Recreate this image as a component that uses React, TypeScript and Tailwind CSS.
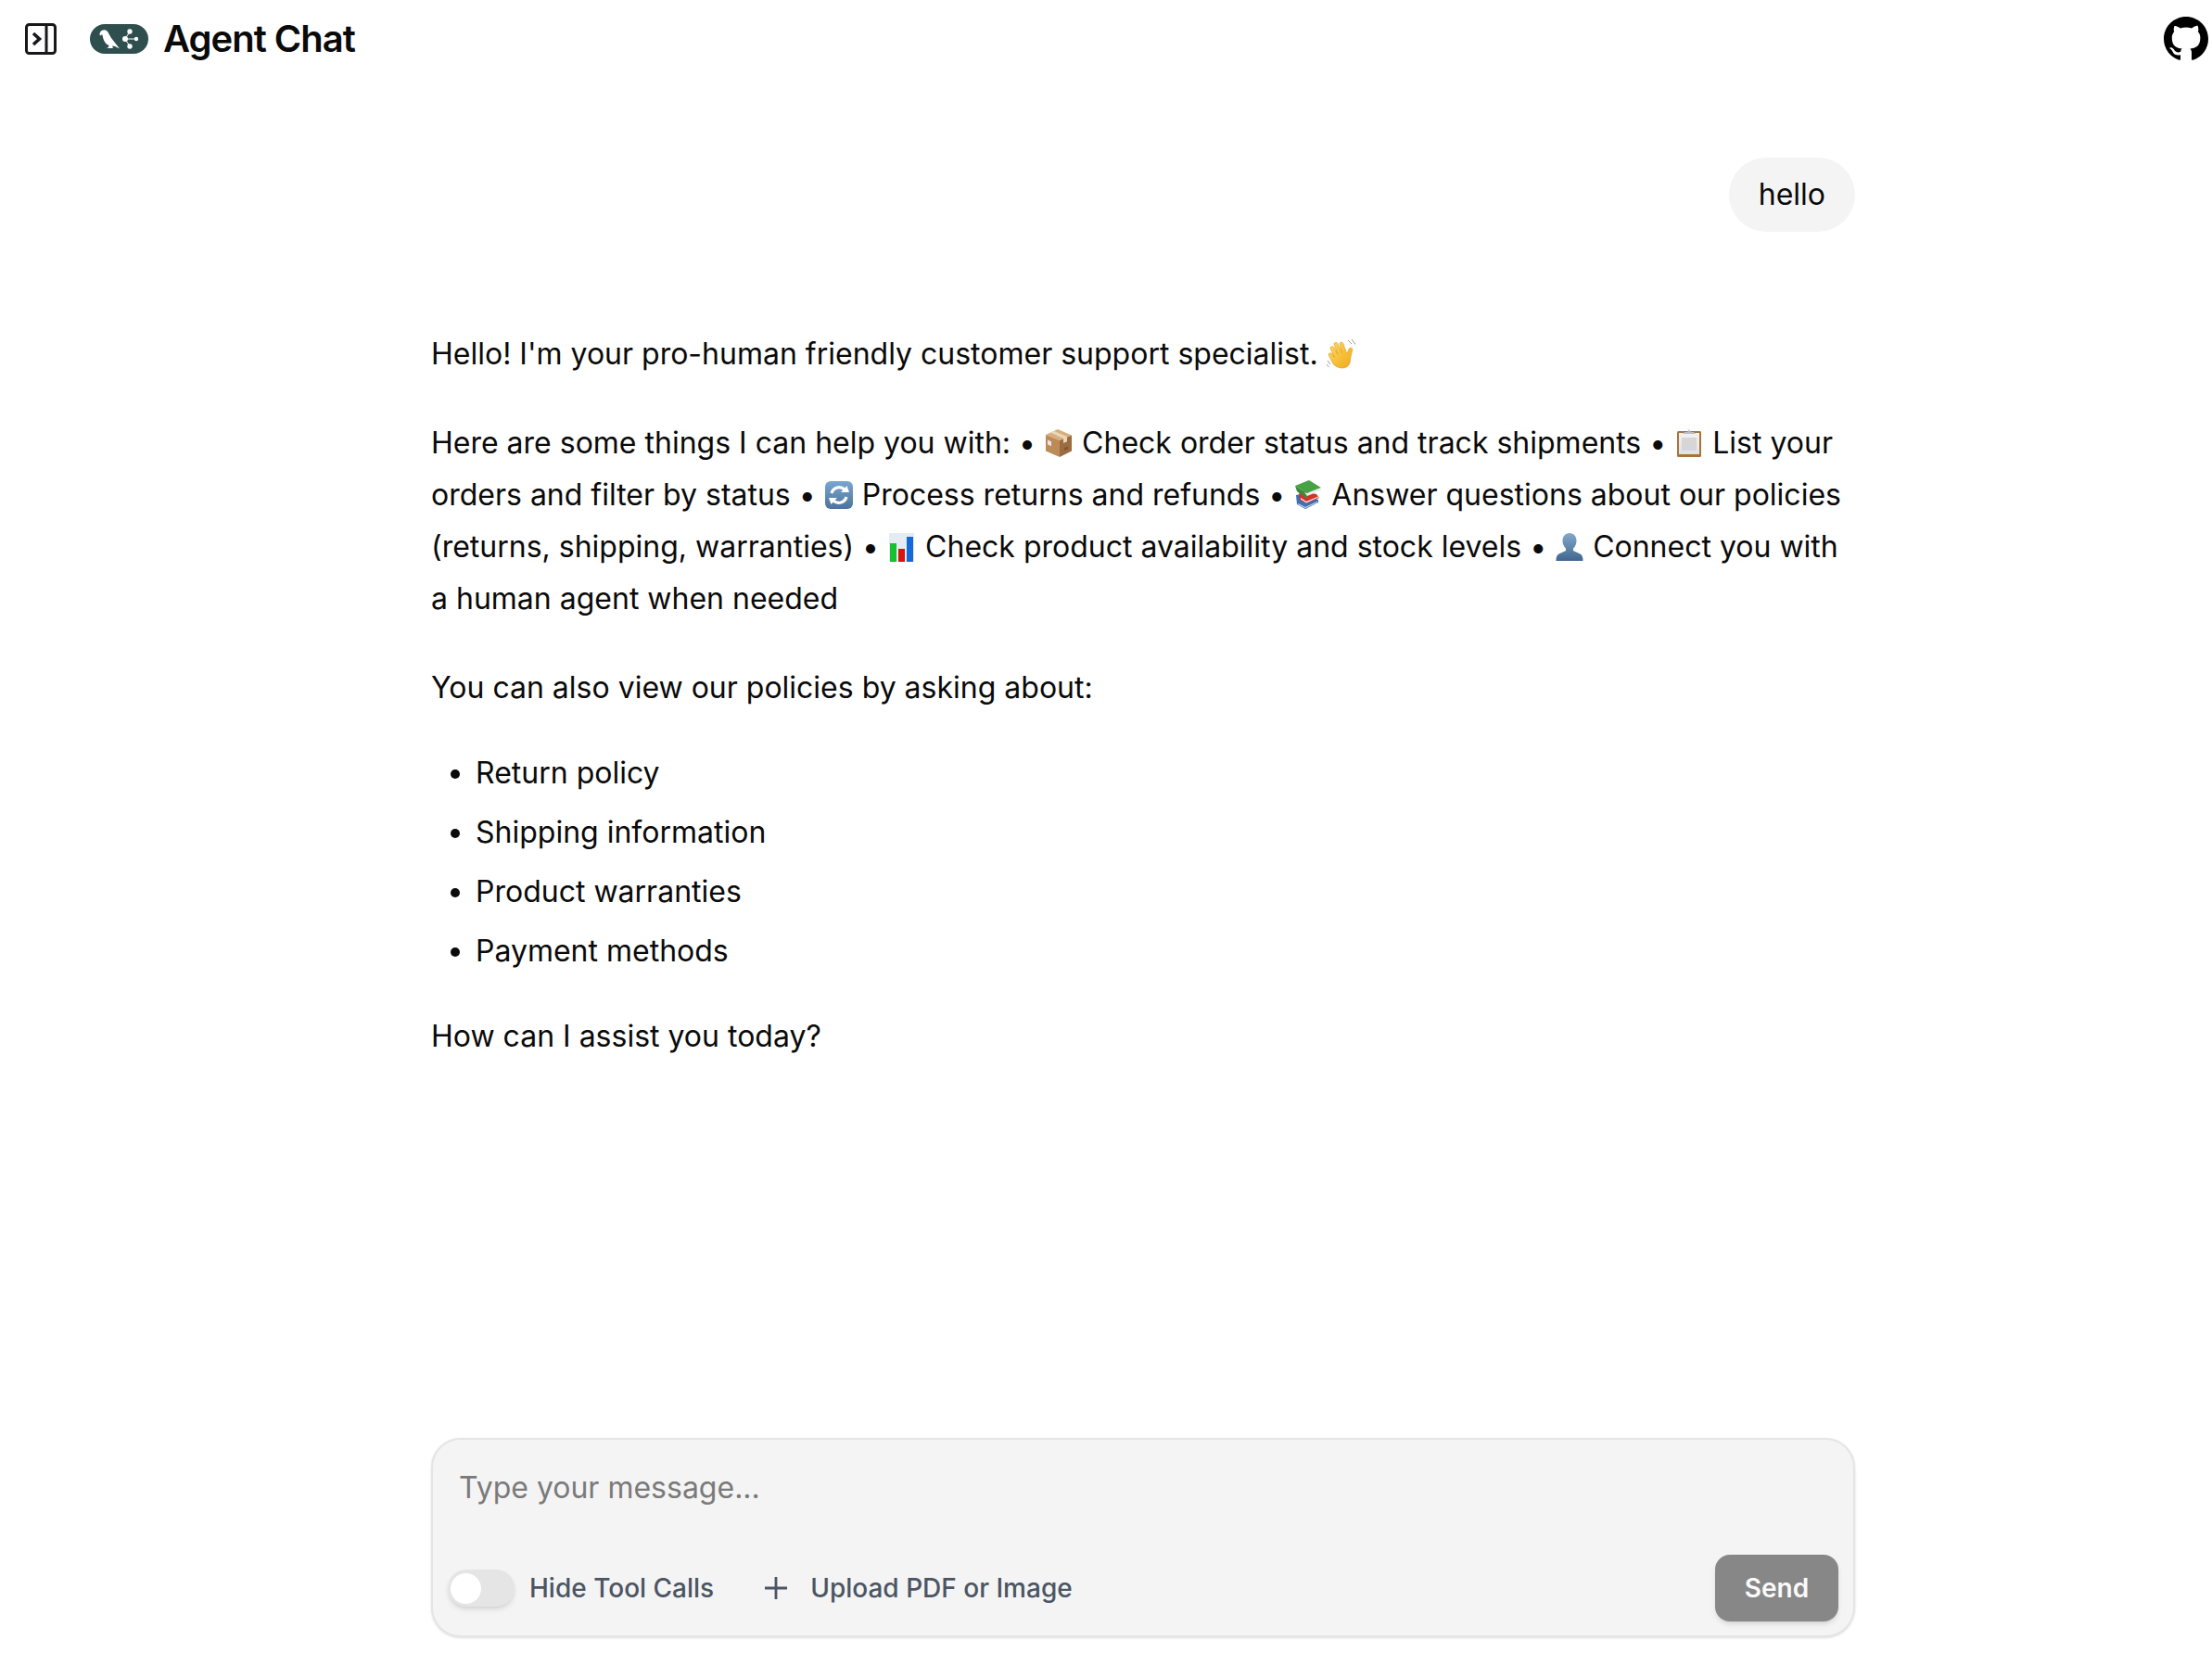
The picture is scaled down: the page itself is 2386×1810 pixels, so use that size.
import React from 'react';

const font = "font-['Inter','Liberation_Sans',sans-serif]";

function PanelIcon() {
  return (
    <svg width="34" height="34" viewBox="0 0 34 34" fill="none" stroke="#18181b" strokeWidth="3" className="shrink-0">
      <rect x="1.500" y="1.500" width="31" height="31" rx="3" />
      <path d="M23 1.500v31" />
      <path d="M9 11l6.500 6L9 23" strokeWidth="3.600" />
    </svg>
  );
}

function Logo() {
  return (
    <svg width="63" height="32" viewBox="0 0 63 32" className="shrink-0">
      <rect width="63" height="32" rx="16" fill="#2f4f4f" />
      <path d="M11 9c1-3 5-3.500 7-2 2 1.500 3 5 5 8l9 11.500-5-2.500-3-.5 1 2.500h-7l2-1 .5-2c-3-1-5-4-6-7-.5-2-1-3.500-1-4.500-1 0-2 .5-2.500 1-.5-1-.5-2-.5-2z" fill="#fff" />
      <circle cx="43" cy="8" r="2.700" fill="#fff" />
      <circle cx="43" cy="24" r="2.700" fill="#fff" />
      <circle cx="38" cy="16" r="3" fill="#fff" />
      <circle cx="50" cy="16" r="2.200" fill="#fff" />
      <path d="M43 8l-5 8 5 8M38 16h12" stroke="#fff" strokeWidth="1" fill="none" />
    </svg>
  );
}

function GithubIcon() {
  return (
    <svg width="48" height="48" viewBox="0 0 16 16" fill="#000">
      <path d="M8 0C3.580 0 0 3.580 0 8c0 3.540 2.290 6.530 5.470 7.590.4.070.55-.17.55-.38 0-.19-.01-.82-.01-1.490-2.010.37-2.530-.49-2.690-.94-.09-.23-.48-.94-.82-1.130-.28-.15-.68-.52-.01-.53.63-.01 1.080.58 1.230.82.72 1.210 1.870.87 2.330.66.070-.52.280-.87.510-1.070-1.780-.2-3.640-.89-3.640-3.950 0-.87.310-1.590.820-2.150-.08-.2-.36-1.020.08-2.120 0 0 .67-.21 2.200.82.640-.18 1.320-.27 2-.27s1.360.09 2 .27c1.530-1.040 2.200-.82 2.200-.82.440 1.100.160 1.920.080 2.120.510.560.820 1.270.820 2.150 0 3.070-1.870 3.750-3.650 3.950.290.250.540.730.540 1.480 0 1.070-.01 1.930-.01 2.200 0 .210.150.460.550.380A8.010 8.010 0 0016 8c0-4.420-3.580-8-8-8z" />
    </svg>
  );
}

function Emoji({ children }: { children: React.ReactNode }) {
  return (
    <svg width="32" height="32" viewBox="0 0 32 32" className="inline-block align-[-5px]">
      {children}
    </svg>
  );
}

const Wave = () => (
  <Emoji>
    <defs>
      <linearGradient id="hand" x1="0" y1="0" x2="1" y2="1">
        <stop offset="0" stopColor="#fddc5c" />
        <stop offset="1" stopColor="#f0a81c" />
      </linearGradient>
    </defs>
    <path transform="translate(-2 0) scale(1.22 1)" d="M15 31c-4.500-.5-7-3-8.500-6.500L3.500 17c-.7-2 1.800-3 2.900-1.300l2.200 3.800L5 9.800c-.7-2 1.900-3 2.900-1.200l3.600 7.400L8.300 5.500c-.6-2 2.100-2.900 3-1l3.900 9.900-2-9.400c-.4-2 2.300-2.600 3-.6l3.300 11 1.900-5c.8-2 3.500-1.100 3 1l-1.800 9.300C22.800 27 20 31.300 15 31z" fill="url(#hand)" stroke="#d98f10" strokeWidth=".5" />
    <path d="M23 1l4 4M27 0l4 5.500M1 23l3 4M0 27l2.500 3" stroke="#8f8f8f" strokeWidth=".9" fill="none" />
  </Emoji>
);

const Box = () => (
  <Emoji>
    <path d="M15 1L30 7.500 17 13 2 7z" fill="#d9ad7c" />
    <path d="M2 7l15 6v18L2 24.500z" fill="#bd8b58" />
    <path d="M17 13l13-5.500V24.500L17 31z" fill="#9c6c3e" />
    <path d="M7 4.500L21 11v5l4-1.700V9L11 3z" fill="#e8d6bd" />
    <rect x="4" y="11" width="4" height="5" fill="#e6e6e6" transform="skewY(22)" />
    <path d="M22 21l4-1.500v3L22 24z" fill="#7f5630" />
  </Emoji>
);

const Clipboard = () => (
  <Emoji>
    <defs>
      <linearGradient id="paper" x1="0" y1="0" x2="0" y2="1">
        <stop offset="0" stopColor="#f2f2f2" />
        <stop offset="1" stopColor="#e2e2e2" />
      </linearGradient>
    </defs>
    <rect x="3" y="3" width="26" height="28" rx="1.500" fill="#a97338" />
    <rect x="5" y="5" width="22" height="23" fill="url(#paper)" />
    <rect x="8" y="10" width="16" height="14" fill="#d6d6d6" />
    <path d="M9 6l2-2h3l2-3 2 3h3l2 2z" fill="#b8bcc2" />
  </Emoji>
);

const Arrows = () => (
  <Emoji>
    <defs>
      <linearGradient id="tile" x1="0" y1="0" x2="0" y2="1">
        <stop offset="0" stopColor="#7aa6d2" />
        <stop offset="1" stopColor="#4d7399" />
      </linearGradient>
    </defs>
    <rect x="1" y="1" width="30" height="30" rx="6" fill="url(#tile)" />
    <path d="M8 14a8.500 8.500 0 0 1 14-4" stroke="#fff" strokeWidth="3.200" fill="none" />
    <path d="M27 13h-9l6.500-7z" fill="#fff" />
    <path d="M24 18a8.500 8.500 0 0 1-14 4" stroke="#fff" strokeWidth="3.200" fill="none" />
    <path d="M5 19h9l-6.500 7z" fill="#fff" />
  </Emoji>
);

const Books = () => (
  <Emoji>
    <path d="M3 16l5-1 19 6v3l-14 7-9-5z" fill="#3f6fb5" />
    <path d="M5 25l8 4 13-6v1l-13 6-8-4z" fill="#e8e8e8" />
    <path d="M6 11l19 4 3 4-14 6-7-4z" fill="#d5332a" />
    <path d="M8 19l6 4 13-5.500v1L14 24.500l-6-4z" fill="#f0f0f0" />
    <path d="M2 6L17 0l13 8-15 6z" fill="#45a343" />
    <path d="M2 6l13 8v6L4 12z" fill="#3c8a3a" />
    <path d="M12 13l3 1 15-6v3l-15 6z" fill="#eeeeee" />
  </Emoji>
);

const Chart = () => (
  <Emoji>
    <rect x="2" y="1" width="27" height="31" fill="#e5ebf3" />
    <rect x="3" y="12" width="7" height="20" fill="#16c02e" />
    <rect x="12" y="18" width="7" height="14" fill="#d8140f" />
    <rect x="21" y="5" width="7" height="27" fill="#1468d8" />
  </Emoji>
);

const Person = () => (
  <Emoji>
    <defs>
      <linearGradient id="skin" x1="0" y1="0" x2="0" y2="1">
        <stop offset="0" stopColor="#82a9cc" />
        <stop offset="1" stopColor="#42678e" />
      </linearGradient>
    </defs>
    <path d="M16 1c4.500 0 7.500 3.500 7.500 8.500 0 3.500-1.500 6-3.500 8v2.500l7.500 3.500c2.500 1.200 3 4 3 7.500H1.500c0-3.500.5-6.300 3-7.500L12 20v-2.500c-2-2-3.500-4.500-3.500-8C8.500 4.500 11.500 1 16 1z" fill="url(#skin)" />
  </Emoji>
);

function ChatMessage() {
  return (
    <div className="w-[1536px] text-[32px] leading-[56px] text-[#0a0a0a]">
      <p className="mb-[40px]">Hello! I'm your pro-human friendly customer support specialist. <Wave /></p>
      <p className="mb-[40px]">
        Here are some things I can help you with: • <Box /> Check order status and track shipments • <Clipboard /> List your orders and filter by status • <Arrows /> Process returns and refunds • <Books /> Answer questions about our policies (returns, shipping, warranties) • <Chart /> Check product availability and stock levels • <Person /> Connect you with a human agent when needed
      </p>
      <p className="mb-[36px]">You can also view our policies by asking about:</p>
      <ul className="list-disc pl-[48px] mb-[36px] flex flex-col gap-[8px]">
        <li>Return policy</li>
        <li>Shipping information</li>
        <li>Product warranties</li>
        <li>Payment methods</li>
      </ul>
      <p>How can I assist you today?</p>
    </div>
  );
}

function Composer() {
  return (
    <div className="w-[1536px] h-[215px] rounded-[32px] border-2 border-[#e5e5e5] bg-[#f4f4f4] shadow-sm pt-[28px] pr-[16px] pb-[15px] pl-[16px] flex flex-col justify-between">
      <div className="pl-[12px] text-[32px] leading-[48px] text-[#7a7a7a]">Type your message...</div>
      <div className="flex items-center">
        <div className="w-[72px] h-[40px] rounded-full bg-[#e5e5e5] flex items-center pl-[3px] shadow-md shrink-0">
          <div className="w-[33px] h-[33px] rounded-full bg-white" />
        </div>
        <span className="ml-[16px] text-[28px] font-medium text-[#4b5563]">Hide Tool Calls</span>
        <svg width="28" height="28" viewBox="0 0 28 28" stroke="#4b5563" strokeWidth="2.800" className="ml-[53px] shrink-0">
          <path d="M14 2v24M2 14h24" />
        </svg>
        <span className="ml-[23px] text-[28px] font-medium text-[#4b5563]">Upload PDF or Image</span>
        <button className="ml-auto w-[133px] h-[72px] rounded-[16px] bg-[#878787] text-[#fafafa] text-[28px] font-semibold shadow-md">Send</button>
      </div>
    </div>
  );
}

export default function App() {
  return (
    <div className={`w-[2386px] h-[1810px] overflow-hidden bg-white flex flex-col ${font}`}>
      <header className="h-[83px] flex items-center pl-[27px] pr-[4px] shrink-0">
        <PanelIcon />
        <div className="ml-[36px]"><Logo /></div>
        <h1 className="ml-[16px] text-[40px] font-semibold tracking-tight text-[#0a0a0a]">Agent Chat</h1>
        <div className="ml-auto"><GithubIcon /></div>
      </header>
      <main className="flex-1 pl-[465px] flex flex-col">
        <div className="w-[1536px] flex justify-end mt-[87px] mb-[104px]">
          <div className="rounded-[40px] bg-[#f4f4f4] px-[32px] py-[12px] text-[32px] leading-[56px] text-[#0a0a0a]">hello</div>
        </div>
        <ChatMessage />
        <div className="mt-auto mb-[44px]"><Composer /></div>
      </main>
    </div>
  );
}
